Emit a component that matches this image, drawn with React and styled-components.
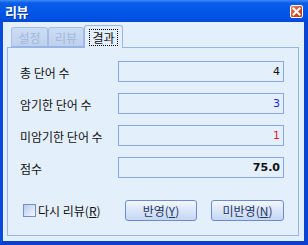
import React from 'react'
import styled, { createGlobalStyle } from 'styled-components'

const GlobalStyle = createGlobalStyle`
  html, body {
    margin: 0;
    padding: 0;
    background: #ffffff;
  }
  body {
    font-family: "Noto Sans CJK KR", "Noto Sans", sans-serif;
  }
`

const Window = styled.div`
  width: 308px;
  height: 245px;
  display: flex;
  flex-direction: column;
  box-sizing: border-box;
  background: #0a47d8;
`

const TitleBar = styled.div`
  height: 22px;
  flex: none;
  display: flex;
  align-items: center;
  justify-content: space-between;
  padding: 0 5px 0 5px;
  box-sizing: border-box;
  background: linear-gradient(#3b8cf6 0, #0b5ce9 3px, #0357e7 50%, #0051e2 85%, #0047d6 100%);
`

const Title = styled.span`
  color: #ffffff;
  font-size: 13px;
  font-weight: 700;
  letter-spacing: -0.5px;
  text-shadow: 1px 1px 0 #0a3a9a;
`

const CloseButton = styled.div`
  width: 13px;
  height: 13px;
  box-sizing: border-box;
  border: 1px solid #ffffff;
  border-radius: 2px;
  background: linear-gradient(135deg, #f08a64, #d9471f 55%, #c13a14);
  display: flex;
  align-items: center;
  justify-content: center;
`

const Frame = styled.div`
  flex: 1;
  display: flex;
  border-left: 3px solid #0b4bdc;
  border-right: 4px solid #0a44d4;
  border-bottom: 4px solid #0a3fcd;
  background: #e4effc;
  padding: 3px 5px 5px 4px;
  box-sizing: border-box;
`

const TabArea = styled.div`
  flex: 1;
  display: flex;
  flex-direction: column;
`

const TabStrip = styled.div`
  display: flex;
  align-items: flex-end;
  padding-left: 4px;
  height: 22px;
`

const Tab = styled.div`
  width: ${p => p.$w}px;
  height: ${p => (p.$active ? 23 : 20)}px;
  margin-bottom: ${p => (p.$active ? -1 : 0)}px;
  box-sizing: border-box;
  display: flex;
  align-items: center;
  justify-content: center;
  font-size: 12px;
  position: relative;
  z-index: ${p => (p.$active ? 1 : 0)};
  color: ${p => (p.$active ? '#111111' : '#a2b7dc')};
  background: ${p => (p.$active ? '#e4effc' : 'linear-gradient(#cddcf3, #bfd1ee)')};
  border: 1px solid ${p => (p.$active ? '#99b5e6' : '#a6bde6')};
  border-bottom: ${p => (p.$active ? 'none' : '1px solid #99b5e6')};
  border-radius: 3px 3px 0 0;
  padding-top: ${p => (p.$active ? 0 : 1)}px;
`

const FocusText = styled.span`
  outline: 1px dotted #000000;
  padding: 0 2px;
  line-height: 15px;
`

const Panel = styled.div`
  flex: 1;
  border: 1px solid #99b5e6;
  padding: 13px 14px 0 12px;
  display: flex;
  flex-direction: column;
`

const Row = styled.div`
  display: grid;
  grid-template-columns: 98px 166px;
  align-items: center;
  height: 21px;
  margin-bottom: 11px;
`

const Label = styled.span`
  font-size: 12px;
  color: #111111;
  padding-top: 2px;
`

const Field = styled.div`
  height: 21px;
  box-sizing: border-box;
  border: 1px solid #86a9e3;
  display: flex;
  align-items: center;
  justify-content: flex-end;
  padding-right: 3px;
  font-family: "DejaVu Sans", "Liberation Sans", sans-serif;
  font-size: 11px;
  font-weight: ${p => (p.$bold ? 700 : 400)};
  color: ${p => p.$color || '#111111'};
`

const BottomRow = styled.div`
  display: flex;
  align-items: center;
  margin-top: 11px;
  height: 21px;
`

const CheckLabel = styled.label`
  width: 105px;
  display: flex;
  align-items: center;
  font-size: 12px;
  color: #111111;
  padding-left: 3px;
  box-sizing: border-box;
`

const CheckBox = styled.span`
  width: 13px;
  height: 13px;
  box-sizing: border-box;
  border: 1px solid #7090cc;
  background: linear-gradient(135deg, #b8ccef, #dbe6f8 60%, #f4f8fe);
  margin-right: 2px;
  flex: none;
`

const Button = styled.button`
  width: ${p => p.$w}px;
  height: 21px;
  margin-right: ${p => p.$gap || 0}px;
  box-sizing: border-box;
  border: 1px solid #6b8cc9;
  border-radius: 3px;
  background: linear-gradient(#f3f7ff, #dce7fa 45%, #c6d7f3);
  font-family: "Noto Sans CJK KR", "Noto Sans", sans-serif;
  font-size: 12px;
  color: #22365f;
  padding: 0;
  display: flex;
  align-items: center;
  justify-content: center;
`

const Key = styled.span`
  text-decoration: underline;
  text-underline-offset: 1px;
`

const rows = [
  { label: '총 단어 수', value: '4', color: '#111111' },
  { label: '암기한 단어 수', value: '3', color: '#1c1cf0' },
  { label: '미암기한 단어 수', value: '1', color: '#f0102a' },
  { label: '점수', value: '75.0', color: '#111111', bold: true },
]

export default function App() {
  return (
    <>
      <GlobalStyle />
      <Window>
        <TitleBar>
          <Title>리뷰</Title>
          <CloseButton>
            <svg width="9" height="9" viewBox="0 0 9 9">
              <path d="M1.5 1.5 L7.5 7.5 M7.5 1.5 L1.5 7.5" stroke="#ffffff" strokeWidth="2" strokeLinecap="square" />
            </svg>
          </CloseButton>
        </TitleBar>
        <Frame>
          <TabArea>
            <TabStrip>
              <Tab $w={37}>설정</Tab>
              <Tab $w={36}>리뷰</Tab>
              <Tab $w={39} $active>
                <FocusText>결과</FocusText>
              </Tab>
            </TabStrip>
            <Panel>
              {rows.map(r => (
                <Row key={r.label}>
                  <Label>{r.label}</Label>
                  <Field $color={r.color} $bold={r.bold}>{r.value}</Field>
                </Row>
              ))}
              <BottomRow>
                <CheckLabel>
                  <CheckBox />
                  다시 리뷰(<Key>R</Key>)
                </CheckLabel>
                <Button $w={72} $gap={14}>반영(<Key>Y</Key>)</Button>
                <Button $w={73}>미반영(<Key>N</Key>)</Button>
              </BottomRow>
            </Panel>
          </TabArea>
        </Frame>
      </Window>
    </>
  )
}
